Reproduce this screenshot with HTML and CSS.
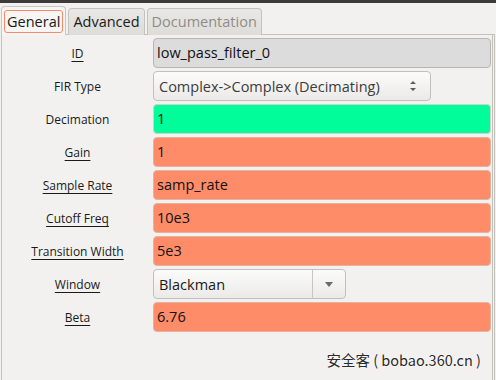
FILE: index.html
```html
<!DOCTYPE html>
<html lang="en">
<head>
  <meta charset="UTF-8">
  <link rel="stylesheet" href="styles.css">
  <title>Properties: low_pass_filter_0</title>
</head>
<body>
  <div class="topbar"></div>
  <nav class="tabs">
    <div class="tab active"><span class="focus">General</span></div>
    <div class="tab">Advanced</div>
    <div class="tab disabled">Documentation</div>
  </nav>
  <main class="panel">
    <div class="params">
      <label class="u">ID</label>
      <div class="entry gray">low_pass_filter_0</div>

      <label>FIR Type</label>
      <div class="combo wide">
        <span>Complex-&gt;Complex (Decimating)</span>
        <svg class="updown" width="10" height="16" viewBox="0 0 10 16">
          <path d="M2 6 L5 3 L8 6 Z M2 10 L5 13 L8 10 Z" fill="#5c5c5c"/>
        </svg>
      </div>

      <label>Decimation</label>
      <div class="entry green">1</div>

      <label class="u">Gain</label>
      <div class="entry coral">1</div>

      <label class="u">Sample Rate</label>
      <div class="entry coral">samp_rate</div>

      <label class="u">Cutoff Freq</label>
      <div class="entry coral">10e3</div>

      <label class="u">Transition Width</label>
      <div class="entry coral">5e3</div>

      <label class="u">Window</label>
      <div class="combo narrow">
        <span>Blackman</span>
        <div class="drop">
          <svg width="10" height="8" viewBox="0 0 10 8"><path d="M1 2 L9 2 L5 7 Z" fill="#6a6a6a"/></svg>
        </div>
      </div>

      <label class="u">Beta</label>
      <div class="entry coral">6.76</div>
    </div>
    <div class="mark">安全客 ( bobao.360.cn )</div>
  </main>
</body>
</html>
```

FILE: styles.css
```css
body {
  margin: 0;
  width: 496px;
  height: 380px;
  background-color: #f2f1f0;
  font-family: 'Open Sans', 'DejaVu Sans', sans-serif;
  color: #1a1a1a;
  overflow: hidden;
  display: flex;
  flex-direction: column;
}

.topbar {
  height: 3px;
  background-color: #3c3b37;
}

.tabs {
  display: flex;
  align-items: flex-end;
  gap: 2px;
  padding: 4px 0 0 1px;
  height: 32px;
  box-sizing: border-box;
  position: relative;
  z-index: 1;
  margin-bottom: -1px;
}

.tab {
  height: 26px;
  padding: 0 4px;
  border: 1px solid #c4c2bd;
  border-bottom: none;
  border-radius: 4px 4px 0 0;
  background: linear-gradient(#eae8e5, #dedcd8);
  font-size: 14.5px;
  line-height: 26px;
  color: #1a1a1a;
}

.tab.active {
  height: 28px;
  padding: 0 2px;
  background: #f6f5f4;
  border-color: #c9c7c2;
  display: flex;
  align-items: center;
}

.tab .focus {
  display: block;
  padding: 0 2px;
  line-height: 21px;
  border: 1px solid #f08c6c;
  border-radius: 3px;
}

.tab.disabled {
  color: #8e8c88;
}

.panel {
  flex: 1;
  margin: 0 1px 0 1px;
  border: 1px solid #c4c2bd;
  border-bottom: none;
  border-right: 3px double #c4c2bd;
  padding: 3px 1px 0 0;
  display: flex;
  flex-direction: column;
}

.params {
  display: grid;
  grid-template-columns: 151px 1fr;
  grid-auto-rows: 30px;
  row-gap: 3px;
}

.params label {
  font-size: 12px;
  text-align: center;
  align-self: center;
  justify-self: center;
  color: #1a1a1a;
}

.params label.u {
  text-decoration: underline;
  text-underline-offset: 3px;
}

.entry {
  border: 1px solid #b8b6b2;
  border-radius: 4px;
  padding: 0 3px;
  font-size: 14.5px;
  line-height: 28px;
  color: #111;
}

.gray {
  background-color: #dcdcdc;
}

.green {
  background-color: #00fd99;
  border-color: #d0d0cc;
}

.coral {
  background-color: #ff8c69;
  border-color: #e0b3a2;
}

.combo {
  display: flex;
  align-items: center;
  border: 1px solid #c2c0bc;
  border-radius: 4px;
  background: linear-gradient(#fbfbfa, #ebeae8);
  font-size: 14.5px;
  color: #3c3c3c;
  box-sizing: border-box;
}

.combo span {
  padding-left: 5px;
  flex: 1;
}

.combo.wide {
  width: 278px;
}

.combo.wide .updown {
  margin-right: 12px;
}

.combo.narrow {
  width: 193px;
  color: #1a1a1a;
}

.drop {
  width: 32px;
  align-self: stretch;
  border-left: 1px solid #c8c6c2;
  display: flex;
  align-items: center;
  justify-content: center;
}

.mark {
  margin-top: auto;
  margin-bottom: 10px;
  align-self: flex-end;
  margin-right: 10px;
  font-family: 'Noto Sans CJK SC', 'DejaVu Sans', sans-serif;
  font-size: 14.5px;
  color: #2a2a2a;
  text-shadow: 0 0 2px #fff, 0 0 1px #fff;
}
```
